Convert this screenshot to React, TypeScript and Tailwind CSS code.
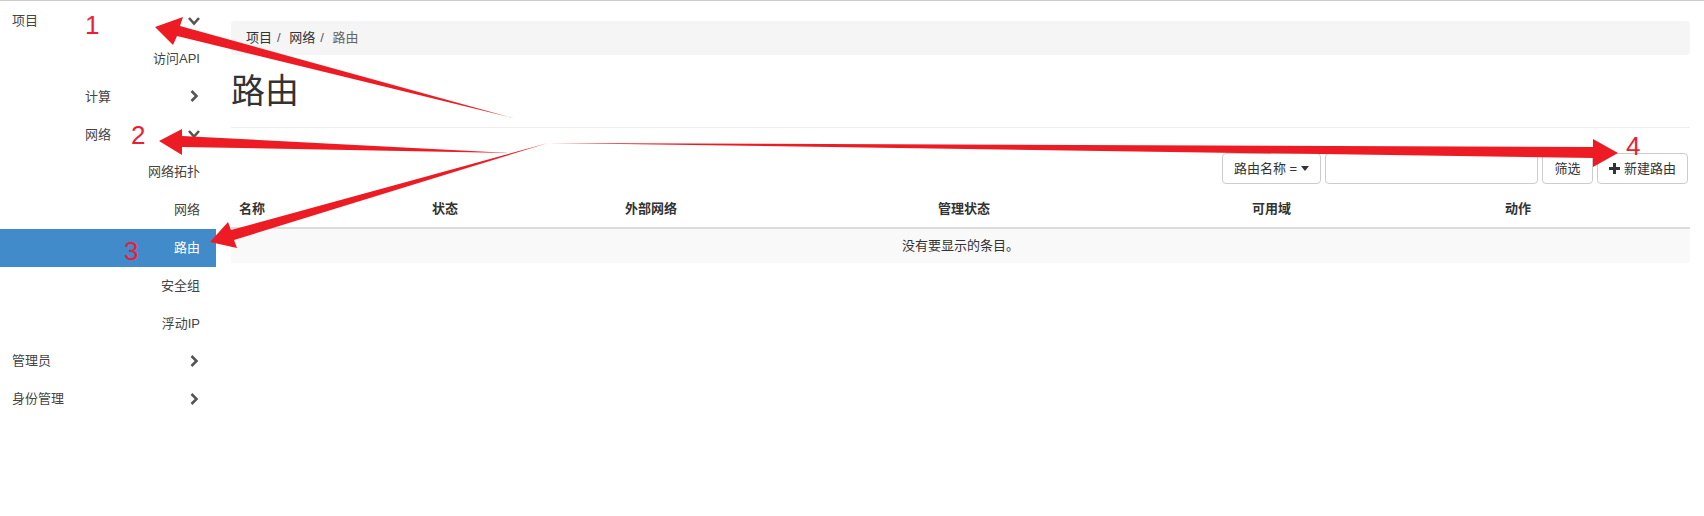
import React from "react";

const FONT = '"Liberation Sans", "Noto Sans CJK SC", sans-serif';

function ChevronDown() {
  return (
    <svg width="14" height="10" viewBox="0 0 14 10" className="shrink-0">
      <path d="M2 2 L7 7.5 L12 2" fill="none" stroke="#555" strokeWidth="2.6" />
    </svg>
  );
}

function ChevronRight() {
  return (
    <svg width="10" height="14" viewBox="0 0 10 14" className="shrink-0">
      <path d="M2.5 2 L7.5 7 L2.5 12" fill="none" stroke="#555" strokeWidth="2.6" />
    </svg>
  );
}

type Item = {
  label: string;
  level: 1 | 2 | 3;
  chevron?: "down" | "right";
  active?: boolean;
};

const items: Item[] = [
  { label: "项目", level: 1, chevron: "down" },
  { label: "访问API", level: 3 },
  { label: "计算", level: 2, chevron: "right" },
  { label: "网络", level: 2, chevron: "down" },
  { label: "网络拓扑", level: 3 },
  { label: "网络", level: 3 },
  { label: "路由", level: 3, active: true },
  { label: "安全组", level: 3 },
  { label: "浮动IP", level: 3 },
  { label: "管理员", level: 1, chevron: "right" },
  { label: "身份管理", level: 1, chevron: "right" },
];

function SidebarRow({ item }: { item: Item }) {
  const base = "h-[37.8px] flex items-center text-[13px]";
  if (item.level === 3) {
    return (
      <div
        className={`${base} justify-end pr-[16px] ${
          item.active ? "bg-[#428bca] text-white" : "text-[#444]"
        }`}
      >
        {item.label}
      </div>
    );
  }
  return (
    <div
      className={`${base} justify-between text-[#444] ${
        item.level === 1 ? "pl-[12px]" : "pl-[85px]"
      } ${item.chevron === "down" ? "pr-[15px]" : "pr-[17px]"}`}
    >
      <span>{item.label}</span>
      {item.chevron === "down" ? <ChevronDown /> : <ChevronRight />}
    </div>
  );
}

function Sidebar() {
  return (
    <div className="w-[216px] shrink-0 pt-[1px]">
      {items.map((it, i) => (
        <SidebarRow key={i} item={it} />
      ))}
    </div>
  );
}

function PlusIcon() {
  return (
    <svg width="11" height="11" viewBox="0 0 11 11" className="mr-[2px]">
      <rect x="4" y="0" width="3" height="11" fill="#333" />
      <rect x="0" y="4" width="11" height="3" fill="#333" />
    </svg>
  );
}

const columns = ["名称", "状态", "外部网络", "管理状态", "可用域", "动作"];

function Main() {
  return (
    <div className="flex-1 pl-[15px] pr-[14px] pt-[20px]">
      <div className="h-[34px] bg-[#f5f5f5] rounded-[4px] flex items-center pl-[15px] text-[13px]">
        <span className="text-[#333]">项目</span>
        <span className="px-[5px] text-[#555]">/{"\u00a0"}</span>
        <span className="text-[#333]">网络</span>
        <span className="px-[5px] text-[#555]">/{"\u00a0"}</span>
        <span className="text-[#666]">路由</span>
      </div>
      <h1 className="mt-[16px] h-[40px] text-[34px] leading-[40px] text-[#333] font-normal">
        路由
      </h1>
      <div className="mt-[16px] h-px bg-[#eee]" />
      <div className="mt-[25px] flex justify-end gap-[4px] pr-[2px] text-[13px] text-[#333]">
        <button className="h-[31px] w-[99px] border border-[#ccc] rounded-[4px] bg-white flex items-center justify-center gap-[4px]">
          <span>路由名称 =</span>
          <svg width="8" height="5" viewBox="0 0 8 5">
            <path d="M0 0 L8 0 L4 5 Z" fill="#333" />
          </svg>
        </button>
        <div className="h-[31px] w-[213px] border border-[#ccc] rounded-[4px] bg-white" />
        <button className="h-[31px] w-[51px] border border-[#ccc] rounded-[4px] bg-white flex items-center justify-center">
          筛选
        </button>
        <button className="h-[31px] w-[91px] border border-[#ccc] rounded-[4px] bg-white flex items-center justify-center gap-[2px]">
          <PlusIcon />
          <span>新建路由</span>
        </button>
      </div>
      <div className="mt-[6px] text-[13px] text-[#333]">
        <div className="grid grid-cols-[193px_193px_313px_314px_253px_1fr] border-b-2 border-[#ddd]">
          {columns.map((c) => (
            <div key={c} className="h-[37px] flex items-center px-[8px] font-bold">
              {c}
            </div>
          ))}
        </div>
        <div className="h-[34px] bg-[#f9f9f9] flex items-center justify-center">
          没有要显示的条目。
        </div>
      </div>
    </div>
  );
}

function Annotations() {
  const red = "#ed1c24";
  return (
    <div className="absolute inset-0 pointer-events-none">
      <svg width="1704" height="516" className="absolute left-0 top-0">
        <polygon
          points="155,26 183,16 180,25 513,117 177,35 173,44"
          fill={red}
        />
        <polygon
          points="159,140 182,128 182,135 510,152 182,146 182,154"
          fill={red}
        />
        <polygon
          points="210,241 228,221 231,229 548,142 234,239 237,247"
          fill={red}
        />
        <polygon
          points="548,142 1593,146 1593,138 1618,152 1593,166 1593,157"
          fill={red}
        />
      </svg>
      <span className="absolute left-[85px] top-[11px] text-[26px] leading-none text-[#ee1c36]">1</span>
      <span className="absolute left-[131px] top-[121px] text-[26px] leading-none text-[#ee1c36]">2</span>
      <span className="absolute left-[124px] top-[237px] text-[26px] leading-none text-[#ee1c36]">3</span>
      <span className="absolute left-[1626px] top-[132px] text-[26px] leading-none text-[#ee1c36]">4</span>
    </div>
  );
}

export default function App() {
  return (
    <div
      className="relative w-[1704px] h-[516px] bg-white border-t border-[#ccc] overflow-hidden"
      style={{ fontFamily: FONT }}
    >
      <div className="flex">
        <Sidebar />
        <Main />
      </div>
      <Annotations />
    </div>
  );
}
